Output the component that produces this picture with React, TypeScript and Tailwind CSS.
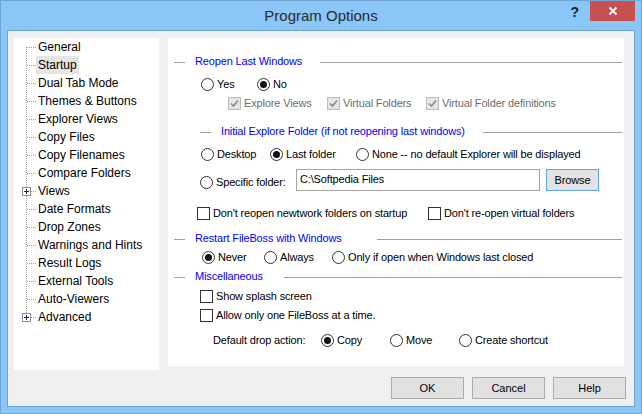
import React from 'react'

const TREE_ITEMS: { label: string; plus?: boolean }[] = [
  { label: 'General' },
  { label: 'Startup' },
  { label: 'Dual Tab Mode' },
  { label: 'Themes & Buttons' },
  { label: 'Explorer Views' },
  { label: 'Copy Files' },
  { label: 'Copy Filenames' },
  { label: 'Compare Folders' },
  { label: 'Views', plus: true },
  { label: 'Date Formats' },
  { label: 'Drop Zones' },
  { label: 'Warnings and Hints' },
  { label: 'Result Logs' },
  { label: 'External Tools' },
  { label: 'Auto-Viewers' },
  { label: 'Advanced', plus: true },
]

function TreeRow({ label, plus, first, last, selected }: { label: string; plus?: boolean; first: boolean; last: boolean; selected: boolean }) {
  return (
    <div className="flex h-[18px] items-center">
      {/* dotted tree connectors */}
      <svg width="22" height="18" className="shrink-0">
        <line x1="12.5" y1={first ? 9 : 0} x2="12.5" y2={last ? 9 : 18} stroke="#a0a0a0" strokeDasharray="1 1" />
        <line x1="13" y1="9.5" x2="22" y2="9.5" stroke="#a0a0a0" strokeDasharray="1 1" />
        {plus && (
          <g>
            <rect x="8.5" y="5.5" width="8" height="8" fill="#fff" stroke="#8f8f8f" />
            <line x1="10" y1="9.5" x2="15" y2="9.5" stroke="#1f2a66" />
            <line x1="12.5" y1="7" x2="12.5" y2="12" stroke="#1f2a66" />
          </g>
        )}
      </svg>
      <span className={`h-[18px] px-[2px] leading-[18px] ${selected ? 'bg-[#e5e5e5]' : ''}`}>{label}</span>
    </div>
  )
}

function Radio({ label, checked }: { label: string; checked?: boolean }) {
  return (
    <div className="flex items-center">
      <span className="flex h-[13px] w-[13px] shrink-0 items-center justify-center rounded-full border border-[#333] bg-white">
        {checked && <span className="h-[7px] w-[7px] rounded-full bg-[#111]" />}
      </span>
      <span className="ml-[3px] whitespace-nowrap">{label}</span>
    </div>
  )
}

function Check({ label, checked, disabled }: { label: string; checked?: boolean; disabled?: boolean }) {
  return (
    <div className="flex items-center">
      <span
        className={`flex h-[13px] w-[13px] shrink-0 items-center justify-center border ${
          disabled ? 'border-[#bcbcbc] bg-[#e6e6e6]' : 'border-[#333] bg-white'
        }`}
      >
        {checked && (
          <svg width="11" height="11" viewBox="0 0 11 11">
            <path d="M2 5.5 L4.5 8 L9 2.5" fill="none" stroke={disabled ? '#8d8d8d' : '#222'} strokeWidth="1.7" />
          </svg>
        )}
      </span>
      <span className={`ml-[3px] whitespace-nowrap ${disabled ? 'text-[#6d6d6d]' : ''}`}>{label}</span>
    </div>
  )
}

function GroupHeader({ title, dashLeft, textWidth }: { title: string; dashLeft: string; textWidth: string }) {
  return (
    <div className={`flex h-[18px] items-center ${dashLeft}`}>
      <span className="mt-[2px] h-px w-[11px] bg-[#a0a0a0]" />
      <span className={`ml-[10px] whitespace-nowrap text-[#0000ff] ${textWidth}`}>{title}</span>
      <span className="mr-[2px] mt-[2px] h-px flex-1 bg-[#a0a0a0]" />
    </div>
  )
}

function DialogButton({ label }: { label: string }) {
  return (
    <div className="flex h-[22px] w-[73px] items-center justify-center border border-[#acacac] bg-[#e1e1e1] text-[11px]">
      {label}
    </div>
  )
}

export default function App() {
  return (
    <div className="flex h-[414px] w-[642px] flex-col border border-[#6fa6d6] bg-[#8ac6f8] px-[6px] pb-[6px] font-['Liberation_Sans',Arial,sans-serif] text-black">
      {/* title bar */}
      <div className="grid h-[29px] shrink-0 grid-cols-[1fr_auto_1fr]">
        <div />
        <div className="pt-[6px] text-[15px] leading-[18px] text-[#2b2b2b]">Program Options</div>
        <div className="flex items-start justify-end">
          <span className="mr-[11px] mt-[3px] text-[14px] font-bold leading-[16px] text-[#222]">?</span>
          <div className="flex h-[20px] w-[45px] items-center justify-center bg-[#c75050]">
            <svg width="10" height="10" viewBox="0 0 10 10">
              <path d="M1.5 1.5 L8.5 8.5 M8.5 1.5 L1.5 8.5" stroke="#fff" strokeWidth="1.8" />
            </svg>
          </div>
        </div>
      </div>

      {/* client area */}
      <div className="flex flex-1 flex-col border border-[#6aa3d4] bg-[#f0f0f0]">
        <div className="flex items-start pl-[6px] pt-[7px]">
          {/* tree */}
          <div className="h-[332px] w-[145px] bg-white text-[12px]">
            {TREE_ITEMS.map((item, i) => (
              <TreeRow
                key={item.label}
                label={item.label}
                plus={item.plus}
                first={i === 0}
                last={i === TREE_ITEMS.length - 1}
                selected={item.label === 'Startup'}
              />
            ))}
          </div>

          {/* startup options */}
          <div className="ml-[9px] h-[328px] w-[456px] bg-white pt-[14px] text-[11px] tracking-[-0.15px]">
            <GroupHeader title="Reopen Last Windows" dashLeft="pl-[6px]" textWidth="w-[125px]" />

            <div className="mt-[5px] flex h-[18px] items-center pl-[33px]">
              <div className="w-[56px]">
                <Radio label="Yes" />
              </div>
              <Radio label="No" checked />
            </div>

            <div className="mt-[1px] flex h-[18px] items-center pl-[60px]">
              <div className="w-[99px]">
                <Check label="Explore Views" checked disabled />
              </div>
              <div className="w-[99px]">
                <Check label="Virtual Folders" checked disabled />
              </div>
              <Check label="Virtual Folder definitions" checked disabled />
            </div>

            <div className="mt-[10px]">
              <GroupHeader
                title="Initial Explore Folder (if not reopening last windows)"
                dashLeft="pl-[32px]"
                textWidth="w-[262px]"
              />
            </div>

            <div className="mt-[5px] flex h-[18px] items-center pl-[33px]">
              <div className="w-[69px]">
                <Radio label="Desktop" />
              </div>
              <div className="w-[86px]">
                <Radio label="Last folder" checked />
              </div>
              <Radio label="None -- no default Explorer will be displayed" />
            </div>

            <div className="mt-[6px] flex h-[22px] items-start pl-[32px]">
              <div className="mt-[5px] w-[96px]">
                <Radio label="Specific folder:" />
              </div>
              <div className="flex h-[22px] w-[244px] items-center border border-[#a5a5a5] bg-white pb-[2px] pl-[3px]">
                C:\Softpedia Files
              </div>
              <div className="ml-[6px] flex h-[22px] w-[53px] items-center justify-center border border-[#5fa6e9] bg-[#e3e3e3]">
                Browse
              </div>
            </div>

            <div className="mt-[13px] flex h-[18px] items-center pl-[29px]">
              <div className="w-[231px]">
                <Check label="Don't reopen newtwork folders on startup" />
              </div>
              <Check label="Don't re-open virtual folders" />
            </div>

            <div className="mt-[7px]">
              <GroupHeader title="Restart FileBoss with Windows" dashLeft="pl-[6px]" textWidth="w-[182px]" />
            </div>

            <div className="mt-[1px] flex h-[18px] items-center pl-[34px]">
              <div className="w-[62px]">
                <Radio label="Never" checked />
              </div>
              <div className="w-[68px]">
                <Radio label="Always" />
              </div>
              <Radio label="Only if open when Windows last closed" />
            </div>

            <div className="mt-[1px]">
              <GroupHeader title="Miscellaneous" dashLeft="pl-[6px]" textWidth="w-[89px]" />
            </div>

            <div className="mt-[2px] flex h-[18px] items-center pl-[32px]">
              <Check label="Show splash screen" />
            </div>
            <div className="mt-[1px] flex h-[18px] items-center pl-[32px]">
              <Check label="Allow only one FileBoss at a time." />
            </div>

            <div className="mt-[7px] flex h-[18px] items-center pl-[45px]">
              <span className="w-[108px] whitespace-nowrap">Default drop action:</span>
              <div className="w-[69px]">
                <Radio label="Copy" checked />
              </div>
              <div className="w-[69px]">
                <Radio label="Move" />
              </div>
              <Radio label="Create shortcut" />
            </div>
          </div>
        </div>

        {/* dialog buttons */}
        <div className="mt-[7px] flex justify-end gap-[8px] pr-[8px]">
          <DialogButton label="OK" />
          <DialogButton label="Cancel" />
          <DialogButton label="Help" />
        </div>
      </div>
    </div>
  )
}
